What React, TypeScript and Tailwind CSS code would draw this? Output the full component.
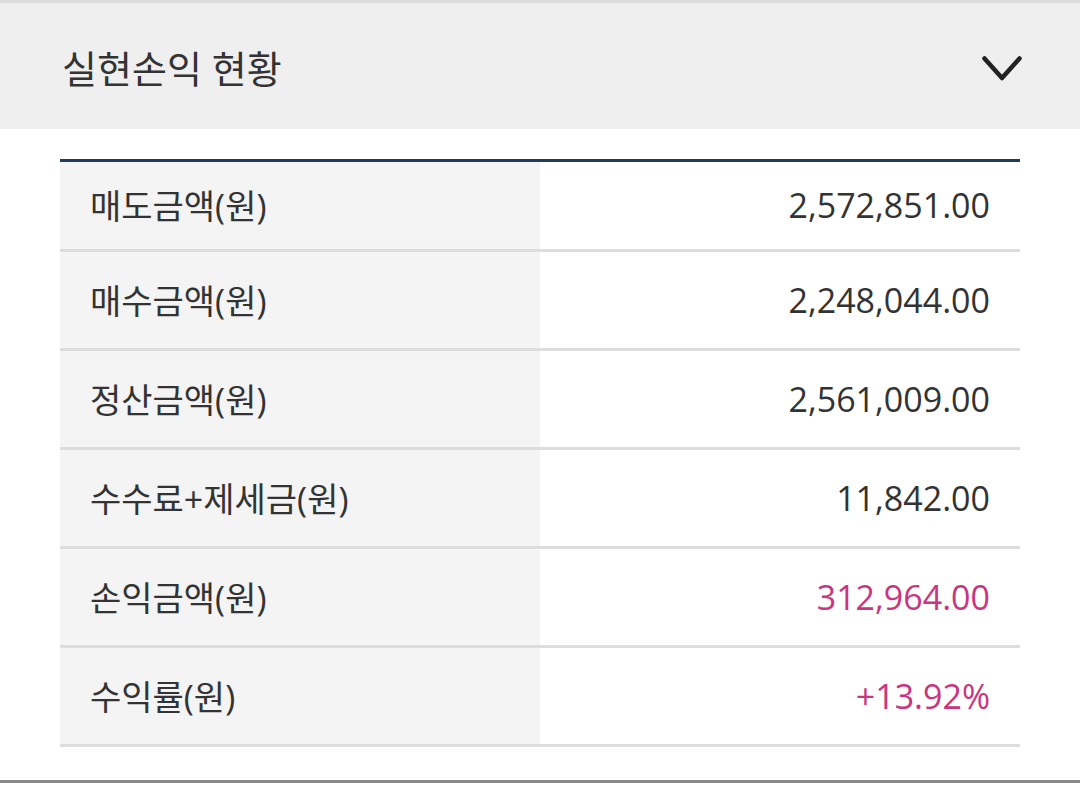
const rows = [
  { label: '매도금액(원)', value: '2,572,851.00', first: true },
  { label: '매수금액(원)', value: '2,248,044.00' },
  { label: '정산금액(원)', value: '2,561,009.00' },
  { label: '수수료+제세금(원)', value: '11,842.00' },
  { label: '손익금액(원)', value: '312,964.00', pink: true },
  { label: '수익률(원)', value: '+13.92%', pink: true },
];

export default function App() {
  return (
    <div className="w-[1080px] h-[791px] bg-white overflow-hidden" style={{ fontFamily: '"Open Sans", "Noto Sans CJK KR", sans-serif' }}>
      {/* header */}
      <div className="border-t-[3px] border-[#dcdcdc] bg-[#efefef] h-[129px] flex items-center justify-between pl-[62px] pr-[58px]">
        <h2 className="text-[38px] text-[#333] pt-[4px]">실현손익 현황</h2>
        <svg width="40" height="28" viewBox="0 0 40 28" fill="none" className="mt-[6px]">
          <path d="M2.5 3.5 L20 23 L37.5 3.5" stroke="#222" strokeWidth="4.5" strokeLinecap="round" strokeLinejoin="round" />
        </svg>
      </div>

      {/* table */}
      <div className="pt-[30px] px-[60px]">
        <div className="border-t-[3px] border-[#1f3c5e]">
          {rows.map((r) => (
            <div key={r.label} className={`flex border-b-[3px] border-[#dddddd] ${r.first ? 'h-[90px]' : 'h-[99px]'}`}>
              <div className="w-[480px] bg-[#f4f4f4] flex items-center pl-[30px] pt-[2px] text-[34px] text-[#333]">{r.label}</div>
              <div className={`flex-1 flex items-center justify-end pr-[30px] text-[34px] ${r.pink ? 'text-[#c8367f]' : 'text-[#333]'}`}>{r.value}</div>
            </div>
          ))}
        </div>
      </div>

      <div className="mt-[33px] h-[3px] bg-[#888]" />
    </div>
  );
}
